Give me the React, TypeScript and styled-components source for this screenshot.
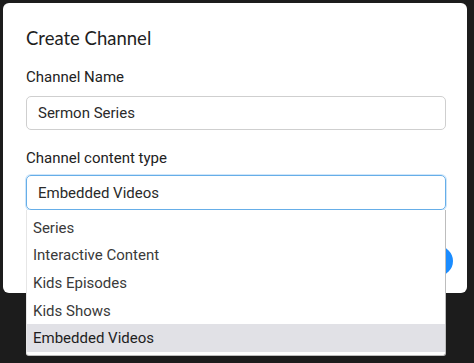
import React from "react";
import styled, { createGlobalStyle } from "styled-components";

const Global = createGlobalStyle`
  html, body { margin: 0; padding: 0; background: #1c1c1c; }
  body { font-family: Roboto, "Liberation Sans", sans-serif; }
  * { box-sizing: border-box; }
`;

const Page = styled.div`
  width: 474px;
  height: 363px;
  padding: 3px 7px 0 3px;
  background: #1c1c1c;
  overflow: hidden;
`;

const Modal = styled.div`
  position: relative;
  width: 464px;
  height: 290px;
  background: #ffffff;
  border-radius: 6px;
  padding: 22px 21px 0 23px;
  display: flex;
  flex-direction: column;
`;

const Title = styled.h2`
  margin: 0;
  font-family: Lato, "Open Sans", sans-serif;
  font-weight: 400;
  font-size: 18.5px;
  line-height: 26px;
  color: #1e1e1e;
`;

const Field = styled.div<{ $top: number }>`
  display: flex;
  flex-direction: column;
  margin-top: ${(p) => p.$top}px;
  position: relative;
`;

const Label = styled.label<{ $gap: number }>`
  font-size: 15px;
  line-height: 18px;
  color: #222;
  margin-bottom: ${(p) => p.$gap}px;
`;

const Input = styled.div<{ $focus?: boolean }>`
  height: ${(p) => (p.$focus ? 35 : 34)}px;
  border: 1px solid ${(p) => (p.$focus ? "#66aee8" : "#cfcfcf")};
  box-shadow: ${(p) => (p.$focus ? "0 0 0 1px #cfe6fa" : "none")};
  border-radius: 5px;
  padding: 0 11px;
  display: flex;
  align-items: center;
  font-size: 15px;
  color: #2a2a2a;
`;

const Dropdown = styled.ul`
  position: absolute;
  left: 0;
  right: 0;
  top: 100%;
  margin: 0;
  padding: 4px 0 3px;
  list-style: none;
  background: #fff;
  border-right: 1px solid #bdbdbd;
  border-bottom: 1px solid #bdbdbd;
  border-left: 1px solid #e6e6e6;
  border-radius: 0 0 3px 3px;
  z-index: 2;
`;

const Option = styled.li<{ $active?: boolean }>`
  height: 27.6px;
  padding: 0 6px;
  display: flex;
  align-items: center;
  font-size: 15px;
  color: ${(p) => (p.$active ? "#1e1e1e" : "#3a3a3a")};
  background: ${(p) => (p.$active ? "#e1e1e6" : "transparent")};
`;

const Footer = styled.div`
  display: flex;
  justify-content: flex-end;
  margin-top: 36px;
  margin-right: -7px;
`;

const Button = styled.div`
  width: 90px;
  height: 30px;
  border-radius: 15px;
  background: #1a8cff;
`;

const options = ["Series", "Interactive Content", "Kids Episodes", "Kids Shows", "Embedded Videos"];

export default function App() {
  return (
    <>
      <Global />
      <Page>
        <Modal>
          <Title>Create Channel</Title>
          <Field $top={17}>
            <Label $gap={10}>Channel Name</Label>
            <Input>Sermon Series</Input>
          </Field>
          <Field $top={19}>
            <Label $gap={8}>Channel content type</Label>
            <Input $focus>Embedded Videos</Input>
            <Dropdown>
              {options.map((o) => (
                <Option key={o} $active={o === "Embedded Videos"}>
                  {o}
                </Option>
              ))}
            </Dropdown>
          </Field>
          <Footer>
            <Button />
          </Footer>
        </Modal>
      </Page>
    </>
  );
}
